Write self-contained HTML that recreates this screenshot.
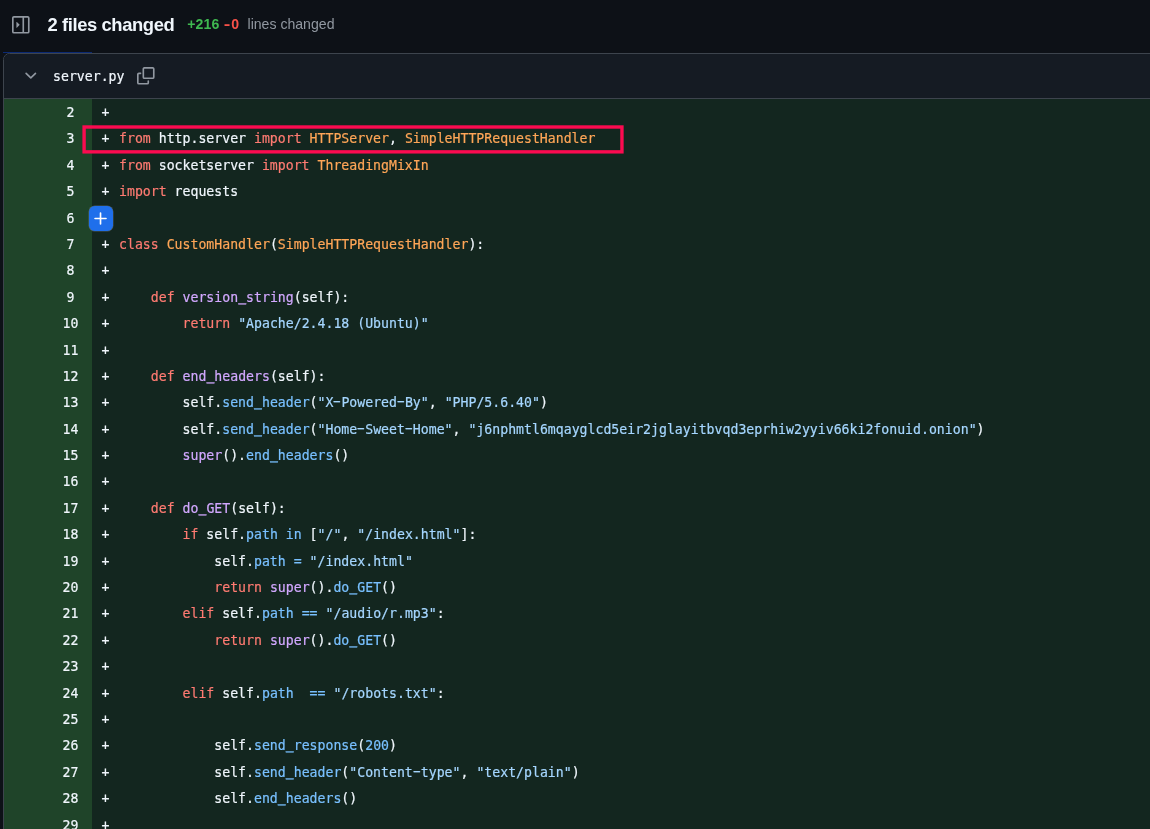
<!DOCTYPE html>
<html lang="en"><head><meta charset="utf-8"><title>2 files changed</title>
<style>
html,body{margin:0;padding:0;}
body{will-change:transform;width:1150px;height:829px;overflow:hidden;background:#0d1117;position:relative;font-family:"Liberation Sans",sans-serif;color:#f0f6fc;}
.top{position:absolute;left:0;top:0;width:1150px;height:52px;}
.sideicon{position:absolute;left:12px;top:16px;width:17.6px;height:17.6px;}
.title{position:absolute;left:47.5px;top:14px;letter-spacing:-0.4px;font-size:18.4px;font-weight:bold;line-height:22px;color:#f0f6fc;white-space:nowrap;}
.stats{position:absolute;left:0;top:14px;font-size:14.1px;line-height:20px;white-space:nowrap;color:#9198a1;}
.stats>b,.stats>span{position:absolute;top:0;}
.stats b.a{color:#3fb950;left:187.2px;letter-spacing:0.15px;} .stats b.d{color:#f85149;left:225px;letter-spacing:1.6px;} .mh{display:inline-block;transform:scaleX(1.4);} .stats .lc{left:247.5px;}
.blue{position:absolute;left:3px;top:52px;width:89px;height:1px;background:#0c2a74;}
.card{position:absolute;left:3px;top:53px;width:1200px;height:900px;border:1px solid #3d444d;border-radius:6.6px;box-sizing:border-box;background:#0d1117;overflow:hidden;}
.hd{position:absolute;left:0;top:0;right:0;height:44px;background:#151b23;border-bottom:1px solid #3d444d;}
.chev{position:absolute;left:17.95px;top:13.1px;width:17.6px;height:17.6px;}
.fname{-webkit-text-stroke:0.2px;position:absolute;left:49px;top:13px;font-family:"DejaVu Sans Mono","Liberation Mono",monospace;font-size:13.2px;line-height:20px;color:#f0f6fc;white-space:nowrap;}
.copy{position:absolute;left:133.2px;top:13px;width:17.6px;height:17.6px;}
.body{position:absolute;left:0;top:45px;right:0;bottom:0;background:#13261f;}
.gut{position:absolute;left:0;top:0;width:88px;bottom:0;background:#1f4429;}
.row{-webkit-text-stroke:0.2px;position:relative;height:26.4px;line-height:26.4px;font-family:"DejaVu Sans Mono","Liberation Mono",monospace;font-size:13.2px;white-space:pre;color:#f0f6fc;}
.ln{position:absolute;left:36.5px;top:1px;width:60px;text-align:center;color:#f0f6fc;}
.pl{position:absolute;left:97.5px;top:1px;}
.cd{position:absolute;left:115px;top:1px;}
.us{position:relative;top:-2px;text-shadow:0 1px 0 currentColor;} .hy{display:inline-block;transform:translateY(-1px) scaleX(1.85);}
.k{color:#ff7b72} .e{color:#ffa657} .f{color:#d2a8ff} .s{color:#a5d6ff} .c{color:#79c0ff}
.redbox{position:absolute;left:0;top:0;width:1150px;height:829px;pointer-events:none;}
.addbtn{position:absolute;left:88.9px;top:205.8px;width:24.4px;height:25.2px;border-radius:5.8px;background:#1f6feb;box-shadow:0 0 0 0.5px rgba(120,130,140,.55);}
.addbtn svg{position:absolute;left:3px;top:4.1px;width:17.6px;height:17.6px;}
</style></head><body>
<div class="top">
<svg class="sideicon" viewBox="0 0 16 16" fill="#9198a1"><path d="M6.823 7.823a.25.25 0 0 1 0 .354l-2.396 2.396A.25.25 0 0 1 4 10.396V5.604a.25.25 0 0 1 .427-.177Z"/><path d="M0 1.750C0 .784.784 0 1.750 0h12.500C15.216 0 16 .784 16 1.750v12.500A1.750 1.750 0 0 1 14.250 16H1.750A1.750 1.750 0 0 1 0 14.250Zm1.750-.250a.250.250 0 0 0-.250.250v12.500c0 .138.112.250.250.250H9.500v-13Zm12.500 13a.250.250 0 0 0 .250-.250V1.750a.250.250 0 0 0-.250-.250H11v13Z"/></svg>
<div class="title">2 files changed</div>
<div class="stats"><b class="a">+216</b><b class="d"><span class="mh">-</span>0</b><span class="lc">lines changed</span></div>
</div>
<div class="blue"></div>
<div class="card">
<div class="hd">
<svg class="chev" viewBox="0 0 16 16" fill="#9198a1"><path d="M12.780 5.220a.749.749 0 0 1 0 1.060l-4.250 4.250a.749.749 0 0 1-1.060 0L3.220 6.280a.749.749 0 1 1 1.060-1.060L8 8.939l3.720-3.719a.749.749 0 0 1 1.060 0Z"/></svg>
<div class="fname">server.py</div>
<svg class="copy" viewBox="0 0 16 16" fill="#9198a1"><path d="M0 6.750C0 5.784.784 5 1.750 5h1.500a.750.750 0 0 1 0 1.500h-1.500a.250.250 0 0 0-.250.250v7.500c0 .138.112.250.250.250h7.500a.250.250 0 0 0 .250-.250v-1.500a.750.750 0 0 1 1.500 0v1.500A1.750 1.750 0 0 1 9.250 16h-7.500A1.750 1.750 0 0 1 0 14.250Z"/><path d="M5 1.750C5 .784 5.784 0 6.750 0h7.500C15.216 0 16 .784 16 1.750v7.500A1.750 1.750 0 0 1 14.250 11h-7.500A1.750 1.750 0 0 1 5 9.250Zm1.750-.250a.250.250 0 0 0-.250.250v7.500c0 .138.112.250.250.250h7.500a.250.250 0 0 0 .250-.250v-7.500a.250.250 0 0 0-.250-.250Z"/></svg>
</div>
<div class="body"><div class="gut"></div>
<div class="row"><span class="ln">2</span><span class="pl">+</span><span class="cd"></span></div>
<div class="row"><span class="ln">3</span><span class="pl">+</span><span class="cd"><span class="k">from</span> http.server <span class="k">import</span> <span class="e">HTTPServer</span>, <span class="e">SimpleHTTPRequestHandler</span></span></div>
<div class="row"><span class="ln">4</span><span class="pl">+</span><span class="cd"><span class="k">from</span> socketserver <span class="k">import</span> <span class="e">ThreadingMixIn</span></span></div>
<div class="row"><span class="ln">5</span><span class="pl">+</span><span class="cd"><span class="k">import</span> requests</span></div>
<div class="row"><span class="ln">6</span><span class="cd"></span></div>
<div class="row"><span class="ln">7</span><span class="pl">+</span><span class="cd"><span class="k">class</span> <span class="e">CustomHandler</span>(<span class="e">SimpleHTTPRequestHandler</span>):</span></div>
<div class="row"><span class="ln">8</span><span class="pl">+</span><span class="cd"></span></div>
<div class="row"><span class="ln">9</span><span class="pl">+</span><span class="cd">    <span class="k">def</span> <span class="f">version<span class="us">_</span>string</span>(self):</span></div>
<div class="row"><span class="ln">10</span><span class="pl">+</span><span class="cd">        <span class="k">return</span> <span class="s">"Apache/2.4.18 (Ubuntu)"</span></span></div>
<div class="row"><span class="ln">11</span><span class="pl">+</span><span class="cd"></span></div>
<div class="row"><span class="ln">12</span><span class="pl">+</span><span class="cd">    <span class="k">def</span> <span class="f">end<span class="us">_</span>headers</span>(self):</span></div>
<div class="row"><span class="ln">13</span><span class="pl">+</span><span class="cd">        self.<span class="c">send<span class="us">_</span>header</span>(<span class="s">"X<span class="hy">-</span>Powered<span class="hy">-</span>By"</span>, <span class="s">"PHP/5.6.40"</span>)</span></div>
<div class="row"><span class="ln">14</span><span class="pl">+</span><span class="cd">        self.<span class="c">send<span class="us">_</span>header</span>(<span class="s">"Home<span class="hy">-</span>Sweet<span class="hy">-</span>Home"</span>, <span class="s">"j6nphmtl6mqayglcd5eir2jglayitbvqd3eprhiw2yyiv66ki2fonuid.onion"</span>)</span></div>
<div class="row"><span class="ln">15</span><span class="pl">+</span><span class="cd">        <span class="f">super</span>().<span class="c">end<span class="us">_</span>headers</span>()</span></div>
<div class="row"><span class="ln">16</span><span class="pl">+</span><span class="cd"></span></div>
<div class="row"><span class="ln">17</span><span class="pl">+</span><span class="cd">    <span class="k">def</span> <span class="f">do<span class="us">_</span>GET</span>(self):</span></div>
<div class="row"><span class="ln">18</span><span class="pl">+</span><span class="cd">        <span class="k">if</span> self.<span class="c">path</span> <span class="c">in</span> [<span class="s">"/"</span>, <span class="s">"/index.html"</span>]:</span></div>
<div class="row"><span class="ln">19</span><span class="pl">+</span><span class="cd">            self.<span class="c">path</span> <span class="c">=</span> <span class="s">"/index.html"</span></span></div>
<div class="row"><span class="ln">20</span><span class="pl">+</span><span class="cd">            <span class="k">return</span> <span class="f">super</span>().<span class="c">do<span class="us">_</span>GET</span>()</span></div>
<div class="row"><span class="ln">21</span><span class="pl">+</span><span class="cd">        <span class="k">elif</span> self.<span class="c">path</span> <span class="c">==</span> <span class="s">"/audio/r.mp3"</span>:</span></div>
<div class="row"><span class="ln">22</span><span class="pl">+</span><span class="cd">            <span class="k">return</span> <span class="f">super</span>().<span class="c">do<span class="us">_</span>GET</span>()</span></div>
<div class="row"><span class="ln">23</span><span class="pl">+</span><span class="cd"></span></div>
<div class="row"><span class="ln">24</span><span class="pl">+</span><span class="cd">        <span class="k">elif</span> self.<span class="c">path</span>  <span class="c">==</span> <span class="s">"/robots.txt"</span>:</span></div>
<div class="row"><span class="ln">25</span><span class="pl">+</span><span class="cd"></span></div>
<div class="row"><span class="ln">26</span><span class="pl">+</span><span class="cd">            self.<span class="c">send<span class="us">_</span>response</span>(<span class="c">200</span>)</span></div>
<div class="row"><span class="ln">27</span><span class="pl">+</span><span class="cd">            self.<span class="c">send<span class="us">_</span>header</span>(<span class="s">"Content<span class="hy">-</span>type"</span>, <span class="s">"text/plain"</span>)</span></div>
<div class="row"><span class="ln">28</span><span class="pl">+</span><span class="cd">            self.<span class="c">end<span class="us">_</span>headers</span>()</span></div>
<div class="row"><span class="ln">29</span><span class="pl">+</span><span class="cd"></span></div>
<div class="row"><span class="ln">30</span><span class="pl">+</span><span class="cd"></span></div>
</div>
</div>
<svg class="redbox" viewBox="0 0 1150 829"><rect x="84.1" y="127" width="537.85" height="24.85" fill="none" stroke="#fb0b50" stroke-width="3.4"/></svg>
<div class="addbtn"><svg viewBox="0 0 16 16" fill="#ffffff"><path d="M7.750 2a.750.750 0 0 1 .750.750V7h4.250a.750.750 0 0 1 0 1.500H8.500v4.250a.750.750 0 0 1-1.500 0V8.500H2.750a.750.750 0 0 1 0-1.500H7V2.750A.750.750 0 0 1 7.750 2Z"/></svg></div>
</body></html>
